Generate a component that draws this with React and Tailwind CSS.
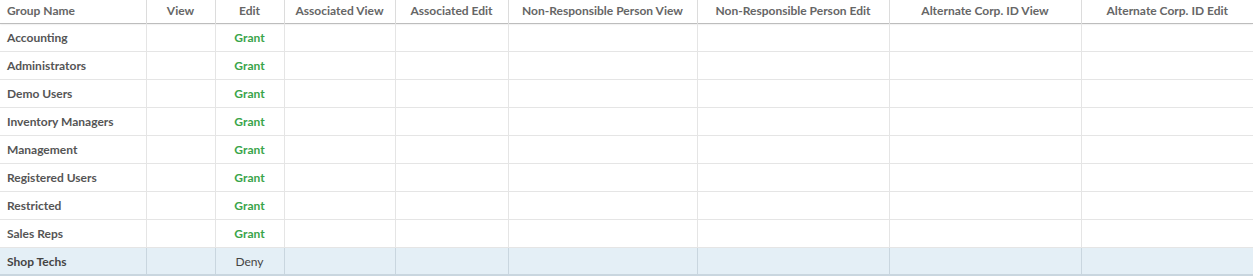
import React from "react";

const cols = [146, 69, 69, 111, 113, 189, 192, 192, 172];
const headers = ["Group Name","View","Edit","Associated View","Associated Edit","Non-Responsible Person View","Non-Responsible Person Edit","Alternate Corp. ID View","Alternate Corp. ID Edit"];
const rows = ["Accounting","Administrators","Demo Users","Inventory Managers","Management","Registered Users","Restricted","Sales Reps"];

export default function App() {
  return (
    <div className="w-[1253px] h-[280px] bg-white font-['Lato',sans-serif] text-[12px]">
      <table className="table-fixed border-collapse w-[1253px]">
        <colgroup>
          {cols.map((w, i) => <col key={i} style={{ width: w }} />)}
        </colgroup>
        <thead>
          <tr className="h-[23px] border-b border-[#bdbdbd] shadow-[0_1px_2px_rgba(0,0,0,0.15)]">
            {headers.map((h, i) => (
              <th key={i} className={`font-bold text-[#666] p-0 whitespace-nowrap border-l border-[#dcdcdc] first:border-l-0 ${i === 0 ? "text-left pl-[7px]" : "text-center"}`}>{h}</th>
            ))}
          </tr>
        </thead>
        <tbody>
          {rows.map((r) => (
            <tr key={r} className="h-[28px] border-b border-[#e5e5e5]">
              <td className="pl-[7px] pt-[2px] font-bold text-[#555]">{r}</td>
              <td className="border-l border-[#e5e5e5]"></td>
              <td className="border-l border-[#e5e5e5] pt-[2px] text-center font-bold text-[#3aa44a]">Grant</td>
              {[0,1,2,3,4,5].map((k) => <td key={k} className="border-l border-[#e5e5e5]"></td>)}
            </tr>
          ))}
          <tr className="h-[28px] bg-[#e4eff6] border-b-2 border-[#c9d6df]">
            <td className="pl-[7px] pt-[2px] font-bold text-[#444]">Shop Techs</td>
            <td className="border-l border-[#c9d6df]"></td>
            <td className="border-l border-[#c9d6df] pt-[2px] text-center text-[#444]">Deny</td>
            {[0,1,2,3,4,5].map((k) => <td key={k} className="border-l border-[#c9d6df]"></td>)}
          </tr>
        </tbody>
      </table>
    </div>
  );
}
